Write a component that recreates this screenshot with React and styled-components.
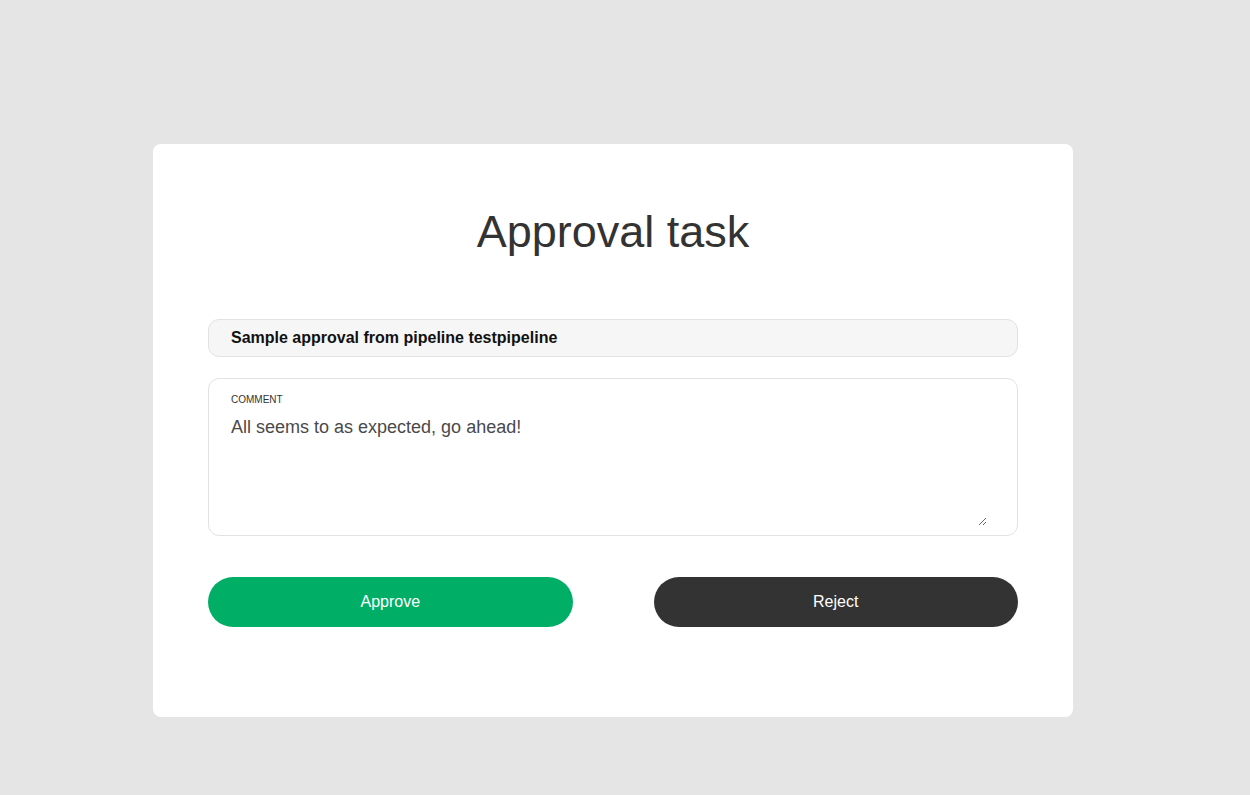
import React, { useState } from 'react'
import styled, { createGlobalStyle } from 'styled-components'

const GlobalStyle = createGlobalStyle`
  html, body {
    margin: 0;
    padding: 0;
    background: #e5e5e5;
    font-family: "Liberation Sans", Arial, Helvetica, sans-serif;
  }
  * {
    box-sizing: border-box;
  }
`

const Page = styled.div`
  min-height: 795px;
  display: flex;
  justify-content: flex-start;
  padding: 144px 0 0 153px;
`

const Card = styled.div`
  width: 920px;
  height: 573px;
  background: #fff;
  border-radius: 8px;
  padding: 62px 55px 90px;
  display: flex;
  flex-direction: column;
`

const Title = styled.h1`
  margin: 0 0 61px;
  text-align: center;
  font-size: 45px;
  font-weight: 400;
  line-height: 1.15;
  color: #333;
`

const Subject = styled.div`
  height: 38px;
  border: 1px solid #e2e2e2;
  border-radius: 11px;
  background: #f6f6f6;
  padding: 1px 22px 0;
  display: flex;
  align-items: center;
  font-size: 16px;
  font-weight: 700;
  color: #111;
`

const CommentBox = styled.label`
  margin-top: 21px;
  height: 158px;
  border: 1px solid #e2e2e2;
  border-radius: 11px;
  padding: 15px 30px 9px 22px;
  display: flex;
  flex-direction: column;
`

const CommentLabel = styled.span`
  font-size: 10px;
  line-height: 12px;
  text-transform: uppercase;
  color: #333;
`

const CommentInput = styled.textarea`
  margin-top: 11px;
  flex: 1;
  width: 100%;
  border: none;
  outline: none;
  padding: 0;
  resize: vertical;
  font-family: "Liberation Sans", Arial, Helvetica, sans-serif;
  font-size: 18px;
  line-height: 1.2;
  color: #4a4a4a;
  background: transparent;
`

const Actions = styled.div`
  margin-top: 41px;
  display: grid;
  grid-template-columns: 1fr 1fr;
  column-gap: 81px;
`

const ActionButton = styled.button`
  height: 50px;
  border: none;
  border-radius: 25px;
  background: ${(props) => (props.$variant === 'approve' ? '#00ae66' : '#333333')};
  color: #fff;
  font-family: "Liberation Sans", Arial, Helvetica, sans-serif;
  font-size: 16px;
  cursor: pointer;
`

const App = () => {
  const [comment, setComment] = useState('All seems to as expected, go ahead!')

  return (
    <>
      <GlobalStyle />
      <Page>
        <Card>
          <Title>Approval task</Title>
          <Subject>Sample approval from pipeline testpipeline</Subject>
          <CommentBox>
            <CommentLabel>Comment</CommentLabel>
            <CommentInput value={comment} onChange={(e) => setComment(e.target.value)} />
          </CommentBox>
          <Actions>
            <ActionButton $variant="approve">Approve</ActionButton>
            <ActionButton $variant="reject">Reject</ActionButton>
          </Actions>
        </Card>
      </Page>
    </>
  )
}

export default App
